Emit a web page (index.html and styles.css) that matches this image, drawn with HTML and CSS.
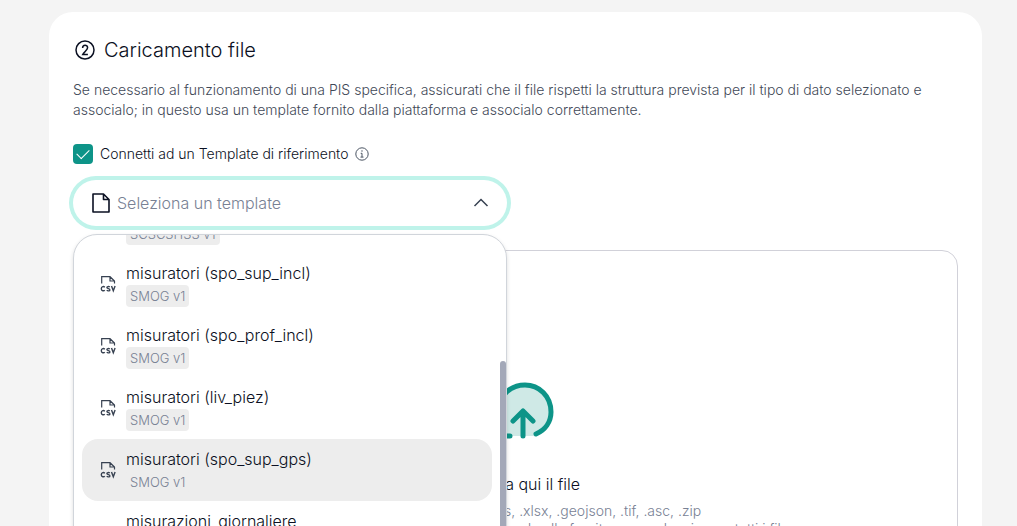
FILE: index.html
```html
<!DOCTYPE html>
<html lang="it">
<head>
    <meta charset="UTF-8">
    <meta name="viewport" content="width=device-width, initial-scale=1">
    <title>Caricamento file</title>
    <link rel="stylesheet" href="styles.css">
</head>
<body>
    <svg class="sprite" aria-hidden="true">
        <symbol id="csv" viewBox="0 0 16 18">
            <path d="M1.700 8.500V1.700h8.300L14.500 6v2.500M10 1.700V6h4.500" fill="none" stroke="currentColor" stroke-width="1.200"/>
            <path d="M4.700 12.300C4 11.200 1.300 11.200 1.300 13.700s2.700 2.500 3.400 1.400M9.800 12c-1-.8-2.900-.5-2.900.5 0 1.500 3 .9 3 2.400 0 1.100-2.100 1.300-3.200.4M11.500 11l1.800 4.700L15.100 11" fill="none" stroke="currentColor" stroke-width="1.400"/>
        </symbol>
    </svg>

    <main class="card">
        <h1 class="title">
            <svg width="20" height="20" viewBox="0 0 20 20" fill="none" stroke="currentColor" stroke-width="1.500" aria-hidden="true">
                <circle cx="10" cy="10" r="9"/>
                <path d="M7.600 8c0-3.800 5-3.600 5-.2 0 2-3.600 4.200-4.900 6.700h5.200"/>
            </svg>
            Caricamento file
        </h1>
        <p class="intro">Se necessario al funzionamento di una PIS specifica, assicurati che il file rispetti la struttura prevista per il tipo di dato selezionato e associalo; in questo usa un template fornito dalla piattaforma e associalo correttamente.</p>

        <div class="connect">
            <input type="checkbox" id="connetti" class="check" checked>
            <label for="connetti">Connetti ad un Template di riferimento</label>
            <svg width="14" height="14" viewBox="0 0 14 14" fill="none" stroke="#4b5563" aria-hidden="true">
                <circle cx="7" cy="7" r="6.200"/>
                <path d="M5.700 6.300H7v3.800M5.500 10.100h3"/>
                <circle cx="7" cy="4" r=".3"/>
            </svg>
        </div>

        <div class="picker">
            <div class="field">
                <svg width="18" height="20" viewBox="0 0 18 20" fill="none" stroke="currentColor" stroke-width="1.600" stroke-linejoin="round" aria-hidden="true">
                    <path d="M1 1h10.500L17 6.500V19H1zM11.500 1v5.500H17"/>
                </svg>
                <select class="select" aria-label="Template">
                    <option>Seleziona un template</option>
                </select>
                <svg width="16" height="10" viewBox="0 0 16 10" fill="none" stroke="#374151" stroke-width="1.500" aria-hidden="true">
                    <path d="M1.500 8L8 1.500 14.500 8"/>
                </svg>
            </div>

            <div class="dropdown">
                <ul class="options">
                    <li><button type="button" class="option">
                        <svg class="csv"><use href="#csv"/></svg>
                        <span class="name">misuratori</span><span class="tag">SCSCSHSS v1</span>
                    </button></li>
                    <li><button type="button" class="option">
                        <svg class="csv"><use href="#csv"/></svg>
                        <span class="name">misuratori (spo_sup_incl)</span><span class="tag">SMOG v1</span>
                    </button></li>
                    <li><button type="button" class="option">
                        <svg class="csv"><use href="#csv"/></svg>
                        <span class="name">misuratori (spo_prof_incl)</span><span class="tag">SMOG v1</span>
                    </button></li>
                    <li><button type="button" class="option">
                        <svg class="csv"><use href="#csv"/></svg>
                        <span class="name">misuratori (liv_piez)</span><span class="tag">SMOG v1</span>
                    </button></li>
                    <li><button type="button" class="option active">
                        <svg class="csv"><use href="#csv"/></svg>
                        <span class="name">misuratori (spo_sup_gps)</span><span class="tag">SMOG v1</span>
                    </button></li>
                    <li><button type="button" class="option tall">
                        <svg class="csv"><use href="#csv"/></svg>
                        <span class="name">misurazioni_giornaliere</span><span class="tag">SMOG v1</span>
                    </button></li>
                </ul>
                <div class="thumb"></div>
            </div>
        </div>

        <section class="dropzone">
            <svg width="76" height="60" viewBox="0 0 76 60" fill="none" stroke="currentColor" stroke-width="5" stroke-linecap="round" stroke-linejoin="round" aria-hidden="true">
                <path class="cloud" d="M14 54C-2 50 0 28 18 27 22-5 73-2 73 30c0 12-5 20-16 24z"/>
                <path d="M32 54H16C-1 52-1 29 19 27 23 12 33 3 47 3c14 0 26 11 26 27 0 10-6 18-15 22M45 54V29M35 39l10-10 10 10"/>
            </svg>
            <h2 class="drop-title">Trascina qui il file</h2>
            <p class="drop-text">Formati supportati: .csv, .xls, .xlsx, .geojson, .tif, .asc, .zip</p>
            <p class="drop-text">Per shapefile, caricare un archivio includendo alla fornitura un solo .zip con tutti i file</p>
        </section>
    </main>
</body>
</html>
```

FILE: styles.css
```css
* {
    box-sizing: border-box;
}
body {
    margin: 0;
    height: 100vh;
    overflow: hidden;
    padding: 12px 35px 0 49px;
    background: #f4f4f4;
    color: #0b1022;
    font-family: Inter, "Open Sans", sans-serif;
    font-weight: 300;
    font-size: 14px;
    line-height: 20px;
}
button, select {
    font: inherit;
    color: inherit;
}
.sprite {
    display: none;
}
.card {
    padding: 24px;
    min-height: 100%;
    background: #fff;
    border-radius: 24px;
}
.title {
    display: flex;
    align-items: center;
    gap: 9px;
    margin: 0 0 16px;
    padding-left: 2px;
    font-size: 20px;
    font-weight: 300;
    line-height: 28px;
}
.intro {
    margin: 0;
    color: #3f4957;
}
.connect {
    display: flex;
    align-items: center;
    gap: 7px;
    margin-top: 24px;
}
.check {
    appearance: none;
    width: 20px;
    height: 20px;
    margin: 0;
    border-radius: 4px;
    background: #0d9488;
    display: grid;
    place-items: center;
}
.check::after {
    content: "";
    width: 11px;
    height: 6px;
    margin-bottom: 3px;
    border: solid #fff;
    border-width: 0 0 1px 1px;
    transform: rotate(-45deg);
}
.picker {
    position: relative;
    width: 50%;
    min-width: 300px;
    max-width: 434px;
    margin-top: 16px;
}
.field {
    display: flex;
    align-items: center;
    gap: 7px;
    height: 46px;
    padding: 0 18px 0 19px;
    border-radius: 24px;
    box-shadow: 0 0 0 4px #bff3ea;
}
.select {
    flex: 1;
    appearance: none;
    border: 0;
    padding: 0;
    background: none;
    color: #788194;
    font-size: 16px;
    outline: none;
}
.dropdown {
    position: absolute;
    top: 54px;
    left: 0;
    right: 0;
    height: 400px;
    overflow: hidden;
    background: #fff;
    border: 1px solid #d1d5db;
    border-radius: 24px;
    box-shadow: 0 2px 4px #0002;
}
/* list is scrolled down a little */
.options {
    list-style: none;
    margin: -44px 14px 0 8px;
    padding: 0;
}
.option {
    display: grid;
    grid-template-columns: 16px 1fr;
    column-gap: 10px;
    align-items: center;
    justify-items: start;
    width: 100%;
    padding: 8px 18px;
    border: 0;
    border-radius: 16px;
    background: none;
}
.option.active {
    background: #ededed;
}
.option.tall {
    padding-bottom: 32px;
}
.option.tall .csv {
    margin-top: 24px;
}
.csv {
    grid-row: 1 / 3;
    width: 16px;
    height: 18px;
    color: #374151;
}
.name {
    font-size: 16px;
    line-height: 24px;
}
.tag {
    padding: 0 4px;
    border-radius: 4px;
    background: #ededed;
    color: #788194;
    font-size: 13px;
    line-height: 22px;
}
.thumb {
    position: absolute;
    top: 126px;
    right: 0;
    bottom: 0;
    width: 6px;
    border-radius: 3px 3px 0 0;
    background: #a3a8b8;
}
.dropzone {
    display: flex;
    flex-direction: column;
    align-items: center;
    margin-top: 24px;
    padding: 131px 24px 24px;
    border: 1px solid #d1d1d9;
    border-radius: 16px;
    color: #0d9488;
}
.cloud {
    fill: #cfe9e6;
    stroke: none;
}
.drop-title {
    margin: 30px 0 6px;
    color: #0b1022;
    font-size: 16px;
    font-weight: 300;
    line-height: 24px;
}
.drop-text {
    margin: 0;
    color: #788194;
    line-height: 18px;
}
```
